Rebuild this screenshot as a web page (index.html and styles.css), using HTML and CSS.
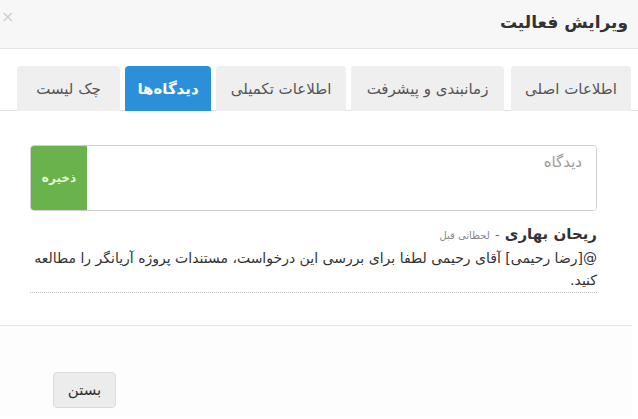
FILE: index.html
```html
<!DOCTYPE html>
<html lang="fa" dir="rtl">
<head>
<meta charset="utf-8">
<title>ویرایش فعالیت</title>
<link rel="stylesheet" href="styles.css">
</head>
<body>
<div class="modal">
  <div class="modal-header">
    <h4 class="modal-title">ویرایش فعالیت</h4>
    <span class="close">×</span>
  </div>
  <div class="modal-body">
    <ul class="tabs">
      <li class="tab t1">اطلاعات اصلی</li>
      <li class="tab t2">زمانبندی و پیشرفت</li>
      <li class="tab t3">اطلاعات تکمیلی</li>
      <li class="tab t4 active">دیدگاه‌ها</li>
      <li class="tab t5">چک لیست</li>
    </ul>
    <div class="tab-content">
      <div class="comment-box">
        <textarea class="comment-input" placeholder="دیدگاه"></textarea>
        <button class="save-btn">ذخیره</button>
      </div>
      <div class="comment">
        <div class="comment-head"><span class="author">ریحان بهاری</span> <span class="dash">-</span> <span class="time">لحظاتی قبل</span></div>
        <div class="comment-text">@[رضا رحیمی] آقای رحیمی لطفا برای بررسی این درخواست، مستندات پروژه آریانگر را مطالعه کنید.</div>
      </div>
    </div>
  </div>
  <div class="modal-footer">
    <button class="close-btn">بستن</button>
  </div>
</div>
</body>
</html>
```

FILE: styles.css
```css
html, body {
  margin: 0;
  padding: 0;
  background: #fff;
}
body {
  font-family: "DejaVu Sans", "Noto Sans", sans-serif;
  color: #333;
  width: 638px;
  height: 419px;
  overflow: hidden;
}
.modal {
  direction: rtl;
  width: 638px;
}
.modal-header {
  height: 48px;
  background: #f7f7f7;
  border-bottom: 1px solid #e6e6e6;
  display: flex;
  align-items: center;
  justify-content: space-between;
  padding: 0 10px 0 0;
}
.modal-title {
  margin: 0;
  font-size: 17px;
  font-weight: bold;
  color: #333;
  line-height: 20px;
  padding-bottom: 4px;
}
.close {
  font-size: 16px;
  color: #cfcfcf;
  margin-left: 1px;
  padding-bottom: 14px;
  line-height: 20px;
}
.modal-body {
  padding-top: 17px;
}
.tabs {
  list-style: none;
  margin: 0;
  padding: 0 7px 0 0;
  display: flex;
  gap: 5px;
  border-bottom: 1px solid #e2e2e2;
  height: 44px;
}
.tab {
  height: 45px;
  box-sizing: border-box;
  display: flex;
  align-items: center;
  justify-content: center;
  background: #efefef;
  color: #555;
  font-size: 15px;
  border-radius: 4px 4px 0 0;
}
.t1 { width: 120px; margin-left: 2px; }
.t2 { width: 153px; }
.t3 { width: 130px; }
.t4 { width: 86px; }
.t5 { width: 103px; }
.tab.active {
  background: #2b90d9;
  color: #fff;
  font-weight: bold;
}
.tab-content {
  padding: 34px 41px 0 30px;
}
.comment-box {
  display: flex;
  height: 66px;
  border: 1px solid #cfcfcf;
  border-radius: 4px;
  box-sizing: border-box;
  overflow: hidden;
}
.comment-input {
  flex: 1;
  border: none;
  outline: none;
  resize: none;
  padding: 7px 14px;
  font-family: inherit;
  font-size: 15px;
  color: #333;
  background: #fff;
  direction: rtl;
}
.comment-input::placeholder {
  color: #9a9a9a;
}
.save-btn {
  width: 56px;
  border: none;
  background: #6ab24c;
  color: #e6f7d8;
  font-family: inherit;
  font-size: 12px;
  font-weight: bold;
  padding: 0;
}
.comment {
  margin-top: 12px;
  border-bottom: 1px dotted #c4c4c4;
  padding-bottom: 1px;
}
.comment-head {
  line-height: 22px;
}
.author {
  font-size: 15px;
  font-weight: bold;
  color: #333;
}
.dash {
  font-size: 13px;
  color: #666;
}
.time {
  font-size: 10px;
  color: #888;
}
.comment-text {
  font-size: 14px;
  line-height: 22px;
  color: #333;
  margin-top: 0;
}
.modal-footer {
  margin-top: 32px;
  margin-right: 6px;
  border-top: 1px solid #e6e6e6;
  background: #fdfdfd;
  height: 92px;
  padding: 46px 0 0 0;
  box-sizing: border-box;
  display: flex;
  justify-content: flex-end;
}
.close-btn {
  margin-left: 53px;
  width: 63px;
  height: 36px;
  background: #ececec;
  border: 1px solid #dcdcdc;
  border-radius: 4px;
  font-family: inherit;
  font-size: 15px;
  color: #333;
  padding: 0;
}
```
